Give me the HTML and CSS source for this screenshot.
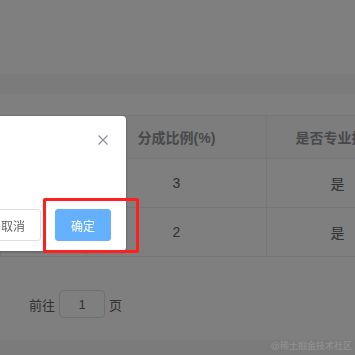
FILE: index.html
```html
<!DOCTYPE html>
<html lang="zh-CN">
<head>
    <meta charset="UTF-8">
    <title>分成设置</title>
    <link rel="stylesheet" href="styles.css">
</head>
<body>
    <div class="page">
        <div class="topbar"></div>
        <div class="tabs-band"></div>

        <div class="content">
            <table class="grid">
                <colgroup>
                    <col class="col-name">
                    <col class="col-ratio">
                    <col class="col-pro">
                </colgroup>
                <thead>
                    <tr>
                        <th>人员</th>
                        <th>分成比例(%)</th>
                        <th>是否专业技术</th>
                    </tr>
                </thead>
                <tbody>
                    <tr>
                        <td></td>
                        <td>3</td>
                        <td>是</td>
                    </tr>
                    <tr>
                        <td></td>
                        <td>2</td>
                        <td>是</td>
                    </tr>
                </tbody>
            </table>

            <div class="pager">
                <span>前往</span>
                <input class="pager-input" type="text" value="1">
                <span>页</span>
            </div>
        </div>

        <div class="footer-band"></div>
    </div>

    <div class="mask"></div>

    <div class="dialog">
        <div class="dialog-header">
            <span class="dialog-title"></span>
            <button class="dialog-close" aria-label="关闭">
                <svg width="10" height="10" viewBox="0 0 10 10">
                    <path d="M0.5 0.5 L9.5 9.5 M9.5 0.5 L0.5 9.5" stroke="#909399" stroke-width="1.3" fill="none"/>
                </svg>
            </button>
        </div>
        <div class="dialog-body"></div>
        <div class="dialog-footer">
            <button class="btn">取消</button>
            <button class="btn btn-primary">确定</button>
        </div>
    </div>

    <div class="highlight"></div>
    <div class="watermark">@稀土掘金技术社区</div>
</body>
</html>
```

FILE: styles.css
```css
body {
    margin: 0;
    font-family: "Liberation Sans", "Noto Sans CJK SC", sans-serif;
    background: #fff;
    overflow: hidden;
}
.page {
    height: 355px;
    position: relative;
}
.topbar {
    height: 74px;
}
.tabs-band {
    height: 20px;
    background: #f6f6f6;
}
.content {
    padding-top: 21px;
}
.grid {
    border-collapse: collapse;
    table-layout: fixed;
    width: 408px;
    color: #606266;
    font-size: 14px;
}
.col-name {
    width: 86px;
}
.col-ratio {
    width: 180px;
}
.col-pro {
    width: 142px;
}
.grid th,
.grid td {
    border: 1px solid #ebeef5;
    text-align: center;
    padding: 0;
    white-space: nowrap;
    overflow: hidden;
}
.grid th {
    height: 42px;
    background: #fafafa;
    color: #909399;
    font-weight: bold;
}
.grid td {
    height: 48px;
}
.pager {
    display: flex;
    align-items: center;
    margin: 33px 0 0 29px;
    font-size: 13px;
    color: #606266;
    gap: 4px;
}
.pager-input {
    width: 46px;
    height: 28px;
    box-sizing: border-box;
    border: 1px solid #dcdfe6;
    border-radius: 4px;
    text-align: center;
    font-family: inherit;
    font-size: 13px;
    color: #606266;
    padding: 0;
}
.footer-band {
    position: absolute;
    left: 0;
    right: 0;
    bottom: 0;
    height: 15px;
    background: #f6f6f6;
}
.mask {
    position: fixed;
    inset: 0;
    background: rgba(0, 0, 0, 0.5);
}
.dialog {
    position: fixed;
    top: 116px;
    left: -274px;
    width: 400px;
    background: #fff;
    border-radius: 4px;
    box-shadow: 0 1px 3px rgba(0, 0, 0, 0.3);
}
.dialog-header {
    position: relative;
    height: 54px;
}
.dialog-close {
    position: absolute;
    top: 19px;
    right: 18px;
    border: 0;
    padding: 0;
    background: none;
    width: 10px;
    height: 10px;
    display: flex;
}
.dialog-body {
    height: 29px;
}
.dialog-footer {
    display: flex;
    justify-content: flex-end;
    gap: 14px;
    padding: 10px 15px 10px;
}
.btn {
    height: 32px;
    width: 56px;
    border: 1px solid #dcdfe6;
    border-radius: 3px;
    background: #fff;
    color: #606266;
    font-family: inherit;
    font-size: 12px;
    padding: 0;
}
.btn-primary {
    background: #66b1ff;
    border-color: #66b1ff;
    color: #fff;
}
.highlight {
    position: fixed;
    left: 43px;
    top: 198px;
    width: 90px;
    height: 49px;
    border: 3px solid #ff1f1f;
    border-radius: 2px;
}
.watermark {
    position: fixed;
    right: 3px;
    bottom: 3px;
    font-size: 9px;
    color: rgba(255, 255, 255, 0.18);
}
```
